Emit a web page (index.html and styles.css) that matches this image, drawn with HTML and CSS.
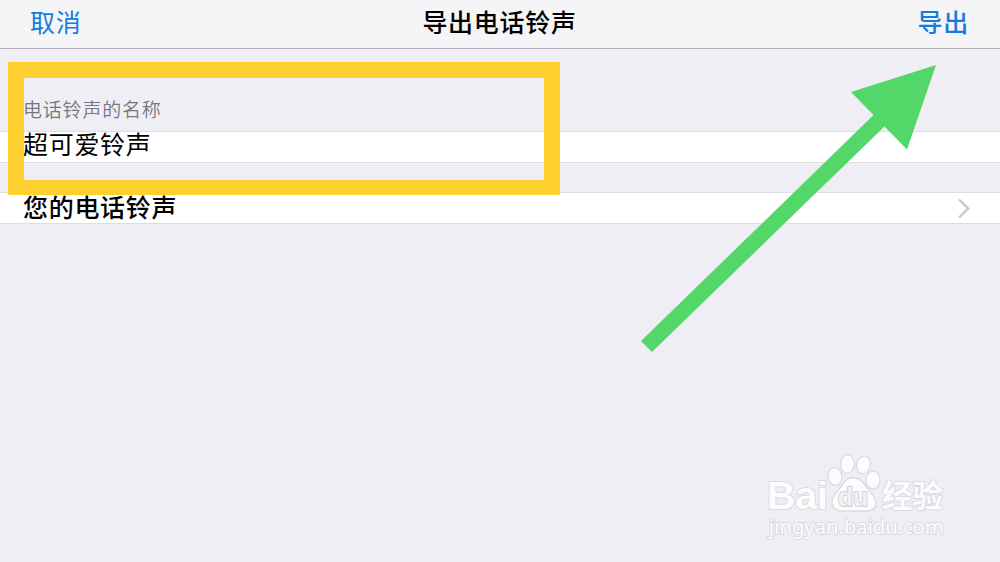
FILE: index.html
```html
<!DOCTYPE html>
<html lang="zh-CN">
  <head>
    <meta charset="UTF-8" />
    <meta name="viewport" content="width=device-width, initial-scale=1.0" />
    <title>导出电话铃声</title>
    <link rel="stylesheet" href="styles.css">
  </head>
  <body>
    <header class="navbar">
      <a class="nav-btn">取消</a>
      <h1>导出电话铃声</h1>
      <a class="nav-btn nav-done">导出</a>
    </header>

    <main>
      <div class="section-label">电话铃声的名称</div>
      <div class="row row-name"><span>超可爱铃声</span></div>
      <div class="row row-link">
        <span>您的电话铃声</span>
        <svg class="chevron" width="14" height="20" viewBox="0 0 14 20">
          <path d="M2 1.500 L11.2 10.500 L2 19.500" />
        </svg>
      </div>
    </main>

    <!-- highlight and arrow over the page -->
    <div class="highlight"></div>
    <svg class="arrow" width="1000" height="562" viewBox="0 0 1000 562">
      <polygon points="936,65 851,92 873.5,115 641,341 652,352 884.5,126.5 907,149.5" />
    </svg>

    <svg class="watermark" width="200" height="105" viewBox="0 0 200 105">
      <text class="wm-latin" x="12" y="64" textLength="61" lengthAdjust="spacingAndGlyphs">Bai</text>
      <ellipse cx="80" cy="31.5" rx="7" ry="9" transform="rotate(-8 80 31.5)" />
      <ellipse cx="92.5" cy="19" rx="7" ry="9.5" />
      <ellipse cx="108.5" cy="20" rx="7" ry="9" transform="rotate(10 108.5 20)" />
      <ellipse cx="118" cy="35" rx="7" ry="9" />
      <path d="M98 32.500C105 32.500 109 38 112 43C116 48 121 52 121 58C121 64 116 66 111 66H87C81 66 77 63 77 57C77 51 82 47 86 42C89 37 92 32.500 98 32.500Z" />
      <text class="wm-du" x="83" y="61" textLength="30" lengthAdjust="spacingAndGlyphs">du</text>
      <text class="wm-cjk" x="127" y="62" textLength="61" lengthAdjust="spacingAndGlyphs">经验</text>
      <text class="wm-url" x="14" y="89" textLength="175" lengthAdjust="spacingAndGlyphs">jingyan.baidu.com</text>
    </svg>
  </body>
</html>
```
FILE: styles.css
```css
body {
  margin: 0;
  height: 562px;
  overflow: hidden;
  position: relative;
  background-color: #efeef4;
  color: #000;
  font-family: "Noto Sans CJK SC", sans-serif;
  font-size: 25px;
  letter-spacing: 0.7px;
}
.navbar {
  display: flex;
  justify-content: space-between;
  align-items: center;
  box-sizing: border-box;
  height: 49px;
  padding: 0 31px 6px 30px;
  background-color: #f5f5f7;
  border-bottom: 1px solid #b2b2b6;
}
.navbar h1 {
  margin: 0;
  font-size: 25px;
  font-weight: 500;
}
.nav-btn {
  color: #147cdc;
  font-weight: 400;
}
.nav-done {
  font-weight: 500;
}
.section-label {
  box-sizing: border-box;
  height: 82px;
  padding: 47px 23px 0;
  color: #77777c;
  font-size: 19px;
  font-weight: 350;
  letter-spacing: 0.8px;
  line-height: 26px;
}
.row {
  display: flex;
  justify-content: space-between;
  align-items: center;
  box-sizing: border-box;
  height: 32px;
  padding: 0 29px 0 23px;
  background-color: #fff;
  border-top: 1px solid #dedde2;
  border-bottom: 1px solid #dedde2;
  line-height: 26px;
}
.row span {
  padding-bottom: 5px;
}
.row-name span {
  padding-bottom: 8px;
}
.row-link {
  margin-top: 29px;
  font-weight: 500;
}
.chevron path {
  fill: none;
  stroke: #c7c7cc;
  stroke-width: 2.4;
}
/* Overlays */
.highlight {
  position: absolute;
  left: 8px;
  top: 62px;
  box-sizing: border-box;
  width: 552px;
  height: 133px;
  border: 16px solid #fed131;
  border-bottom-width: 15px;
}
.arrow {
  position: absolute;
  left: 0;
  top: 0;
  fill: #54d769;
}
.watermark {
  position: absolute;
  left: 755px;
  top: 445px;
  fill: #fcfcfe;
  stroke: #dadadf;
  stroke-width: 1.3;
  letter-spacing: 0;
}
.watermark text {
  paint-order: stroke;
  stroke-width: 2;
  stroke-linejoin: round;
}
.wm-latin {
  font: bold 39px "Liberation Sans", sans-serif;
}
.watermark .wm-du {
  font: bold 25px "Liberation Sans", sans-serif;
  fill: #f1f1f5;
  stroke: #cfcfd5;
}
.wm-cjk {
  font: bold 31px "Noto Sans CJK SC", sans-serif;
}
.wm-url {
  font: 20px "Noto Sans", sans-serif;
}
```
